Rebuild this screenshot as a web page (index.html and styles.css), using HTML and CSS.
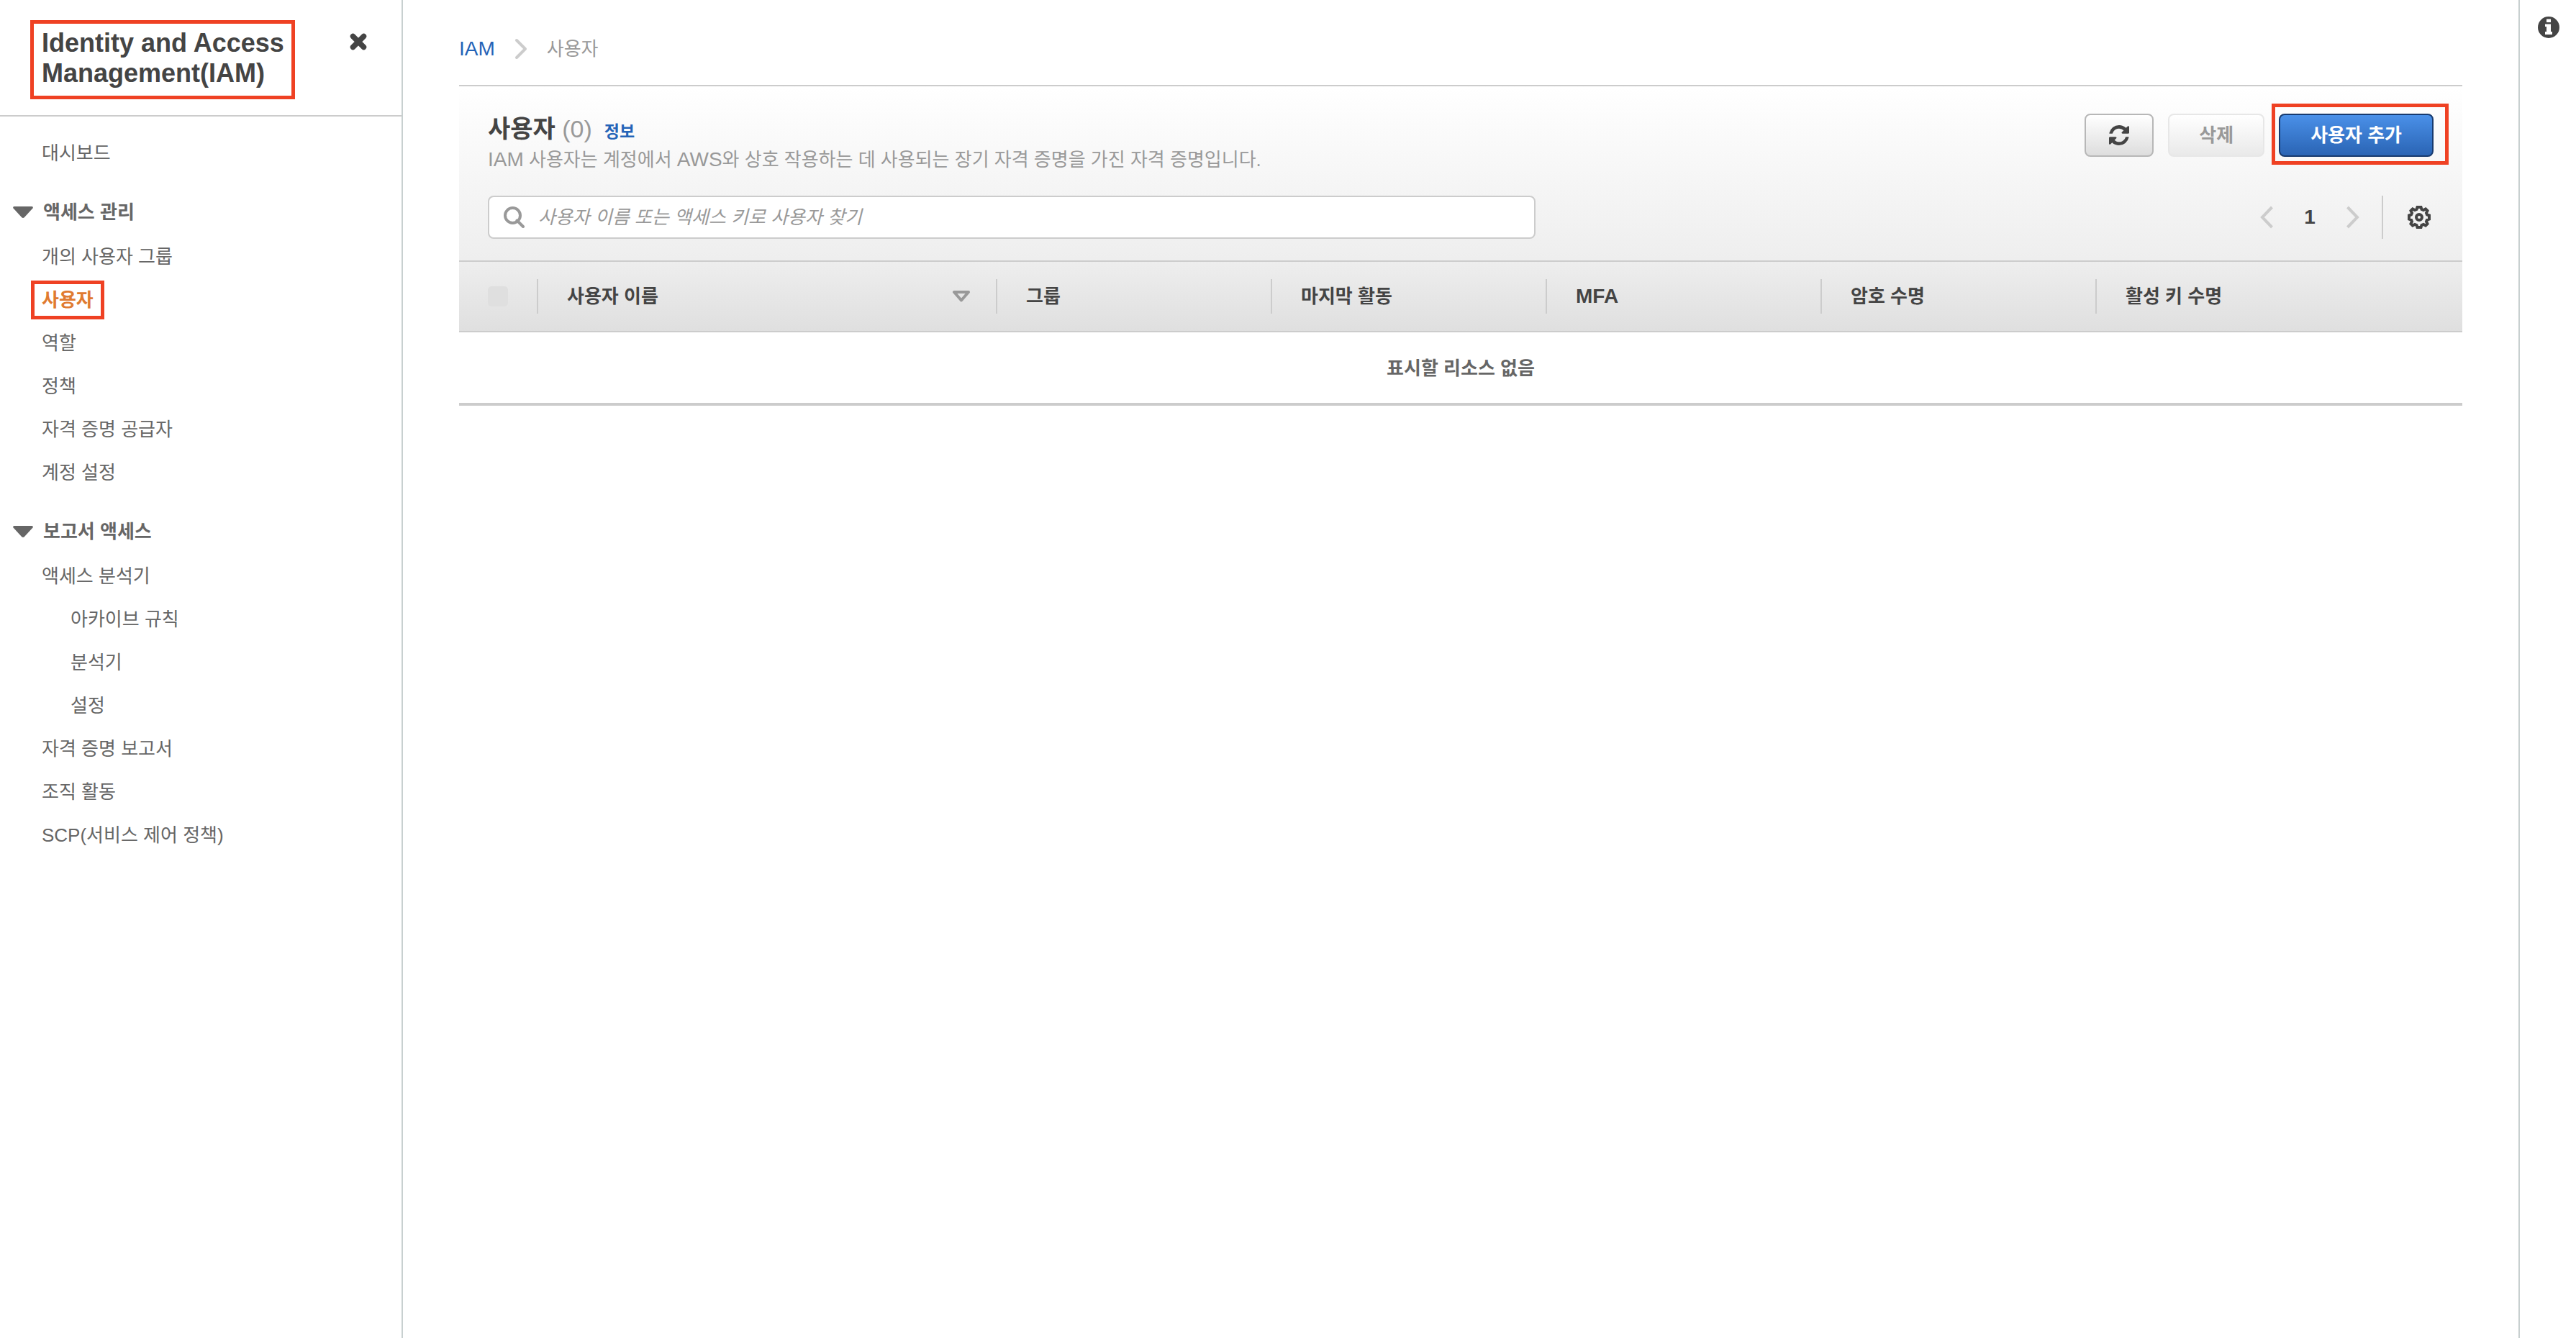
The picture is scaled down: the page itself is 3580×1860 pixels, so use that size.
FILE: index.html
```html
<!DOCTYPE html>
<html lang="ko">
<head>
<meta charset="utf-8">
<meta name="viewport" content="width=device-width, initial-scale=1">
<title>IAM - 사용자</title>
<link rel="stylesheet" href="styles.css">
</head>
<body>
<div class="app">
  <aside class="sidebar">
    <header class="sidebar-header">
      <h1 class="sidebar-title marked">Identity and Access Management(IAM)</h1>
      <button class="icon-button close" type="button" aria-label="닫기">
        <svg width="26" height="26" viewBox="0 0 26 26"><path d="M5.500 5.500L20.500 20.500M20.500 5.500L5.500 20.500" stroke="#444" stroke-width="7.500" stroke-linecap="round"/></svg>
      </button>
    </header>
    <nav class="nav">
      <ul class="nav-list">
        <li><a href="#dashboard">대시보드</a></li>
      </ul>
      <h2 class="nav-heading"><svg class="caret" width="28" height="16" viewBox="0 0 28 16"><path d="M1.500 0H26.500Q28.500 0.500 27.500 2.500L16 15Q14 17 12 15L0.500 2.500Q-0.500 0.500 1.500 0Z" fill="#666"/></svg>액세스 관리</h2>
      <ul class="nav-list">
        <li><a href="#groups">개의 사용자 그룹</a></li>
        <li><a class="active marked" href="#users" aria-current="page">사용자</a></li>
        <li><a href="#roles">역할</a></li>
        <li><a href="#policies">정책</a></li>
        <li><a href="#providers">자격 증명 공급자</a></li>
        <li><a href="#account">계정 설정</a></li>
      </ul>
      <h2 class="nav-heading"><svg class="caret" width="28" height="16" viewBox="0 0 28 16"><path d="M1.500 0H26.500Q28.500 0.500 27.500 2.500L16 15Q14 17 12 15L0.500 2.500Q-0.500 0.500 1.500 0Z" fill="#666"/></svg>보고서 액세스</h2>
      <ul class="nav-list">
        <li><a href="#analyzer">액세스 분석기</a>
          <ul class="nav-sublist">
            <li><a href="#archive-rules">아카이브 규칙</a></li>
            <li><a href="#analyzers">분석기</a></li>
            <li><a href="#settings">설정</a></li>
          </ul>
        </li>
        <li><a href="#credential-report">자격 증명 보고서</a></li>
        <li><a href="#organization">조직 활동</a></li>
        <li><a href="#scp">SCP(서비스 제어 정책)</a></li>
      </ul>
    </nav>
  </aside>

  <main class="main">
    <nav class="breadcrumb" aria-label="경로">
      <a class="latin" href="#iam">IAM</a>
      <svg width="18" height="30" viewBox="0 0 18 30"><path d="M3 3L15 15L3 27" fill="none" stroke="#ccc" stroke-width="4" stroke-linecap="round" stroke-linejoin="round"/></svg>
      <span>사용자</span>
    </nav>

    <section class="panel">
      <div class="panel-top">
        <div class="panel-row heading-row">
          <div>
            <h2 class="panel-title">사용자 <span class="count">(0)</span><a class="info-link" href="#info">정보</a></h2>
            <p class="description"><span class="latin">IAM</span> 사용자는 계정에서 <span class="latin">AWS</span>와 상호 작용하는 데 사용되는 장기 자격 증명을 가진 자격 증명입니다.</p>
          </div>
          <div class="actions">
            <button class="button" type="button" aria-label="새로 고침">
              <svg width="28" height="28" viewBox="0 0 1536 1536"><path fill="#444" d="M1511 928q0 5-1 7-64 268-268 434.500T764 1536q-146 0-282.500-55T238 1324l-129 129q-19 19-45 19t-45-19-19-45V960q0-26 19-45t45-19h448q26 0 45 19t19 45-19 45l-137 137q71 66 161 102t187 36q134 0 250-65t186-179q11-17 53-117 8-23 30-23h192q13 0 22.500 9.500t9.500 22.500zm25-800v448q0 26-19 45t-45 19h-448q-26 0-45-19t-19-45 19-45l138-138Q969 256 768 256q-134 0-250 65T332 500q-11 17-53 117-8 23-30 23H50q-13 0-22.500-9.500T18 608v-7q65-268 270-434.500T768 0q146 0 284 55.500T1297 212l130-129q19-19 45-19t45 19 19 45z"/></svg>
            </button>
            <button class="button" type="button" disabled>삭제</button>
            <button class="button primary marked" type="button">사용자 추가</button>
          </div>
        </div>
        <div class="panel-row tools-row">
          <label class="search">
            <svg width="30" height="30" viewBox="0 0 30 30"><path d="M18.500 19.500L27 28" stroke="#999" stroke-width="4" stroke-linecap="round"/><circle cx="12.500" cy="12.500" r="10.500" fill="none" stroke="#999" stroke-width="4"/></svg>
            <input type="search" placeholder="사용자 이름 또는 액세스 키로 사용자 찾기" aria-label="사용자 찾기">
          </label>
          <div class="pager">
            <button class="icon-button" type="button" aria-label="이전">
              <svg width="20" height="32" viewBox="0 0 20 32"><path d="M17.500 2L4 16L17.500 30" fill="none" stroke="#ccc" stroke-width="4"/></svg>
            </button>
            <span class="page-number">1</span>
            <button class="icon-button" type="button" aria-label="다음">
              <svg width="20" height="32" viewBox="0 0 20 32"><path d="M2.500 2L16 16L2.500 30" fill="none" stroke="#ccc" stroke-width="4"/></svg>
            </button>
            <span class="pager-divider"></span>
            <button class="icon-button" type="button" aria-label="환경설정">
              <svg width="32" height="32" viewBox="0 0 32 32" fill="none" stroke="#444" stroke-width="4"><path d="M13.500 2H18.500L19.500 5L22 6L25 4.500L27.500 7L26 10L27 12.500L30 13.500V18.500L27 19.500L26 22L27.500 25L25 27.500L22 26L19.500 27L18.500 30H13.500L12.500 27L10 26L7 27.500L4.500 25L6 22L5 19.500L2 18.500V13.500L5 12.500L6 10L4.500 7L7 4.500L10 6L12.500 5Z"/><circle cx="16" cy="16" r="4"/></svg>
            </button>
          </div>
        </div>
      </div>

      <table class="users">
        <colgroup>
          <col class="col-check"><col class="col-name"><col class="col-data"><col class="col-data"><col class="col-data"><col class="col-data"><col>
        </colgroup>
        <thead>
          <tr>
            <th scope="col"><div class="cell"><input class="check" type="checkbox" aria-label="모두 선택" disabled></div></th>
            <th scope="col"><div class="cell sortable">사용자 이름
              <svg width="28" height="16" viewBox="0 0 28 16"><path d="M4 2H24L14 13.500Z" fill="none" stroke="#999" stroke-width="4" stroke-linejoin="round"/></svg></div></th>
            <th scope="col"><div class="cell">그룹</div></th>
            <th scope="col"><div class="cell">마지막 활동</div></th>
            <th scope="col"><div class="cell latin">MFA</div></th>
            <th scope="col"><div class="cell">암호 수명</div></th>
            <th scope="col"><div class="cell">활성 키 수명</div></th>
          </tr>
        </thead>
        <tbody>
          <tr><td colspan="7">표시할 리소스 없음</td></tr>
        </tbody>
      </table>
    </section>
  </main>

  <aside class="rail">
    <button class="icon-button" type="button" aria-label="정보 패널 열기">
      <svg width="30" height="30" viewBox="0 0 30 30"><circle cx="15" cy="15" r="15" fill="#444"/><path d="M12 3.500H18V8H12ZM10 10.500H18V21H20V25H10V21H12V14H10Z" fill="#fff"/></svg>
    </button>
  </aside>
</div>
</body>
</html>
```
FILE: styles.css
```css
* {
  box-sizing: border-box;
}

body {
  margin: 0;
  background: #fff;
  color: #666;
  font-family: "Liberation Sans", "Noto Sans CJK KR", sans-serif;
  font-size: 26px;
  line-height: 36px;
}

h1, h2, p, ul {
  margin: 0;
  padding: 0;
}

ul {
  list-style: none;
}

a {
  color: #2464b8;
  text-decoration: none;
}

svg {
  display: block;
  flex: none;
}

button, input {
  margin: 0;
  font: inherit;
}

.latin {
  font-size: 28px;
}

.app {
  display: flex;
  min-height: 100vh;
}

/* Red call-out frames drawn over the highlighted items */
.marked {
  position: relative;
}

.marked::after {
  content: "";
  position: absolute;
  border: 5px solid #ef4123;
  pointer-events: none;
}

.icon-button {
  display: block;
  padding: 0;
  border: 0;
  background: none;
}

/* Sidebar */
.sidebar {
  flex: 0 0 560px;
  border-right: 2px solid #c8d0d0;
}

.sidebar-header {
  display: flex;
  justify-content: space-between;
  align-items: flex-start;
  padding: 39px 47px 37px 58px;
  border-bottom: 2px solid #ccc;
}

.sidebar-title {
  width: 350px;
  color: #444;
  font-size: 36px;
  line-height: 42px;
}

.sidebar-title::after {
  inset: -11px -2px -15px -16px;
}

.close {
  margin-top: 6px;
}

.nav {
  padding: 21px 0;
}

.nav-list {
  padding-left: 58px;
  line-height: 60px;
}

.nav-sublist {
  padding-left: 40px;
}

.nav-list a {
  color: #666;
}

.nav-list .active {
  color: #e07b30;
  font-weight: bold;
}

.active::after {
  inset: -12px -15px;
}

.nav-heading {
  display: flex;
  align-items: center;
  gap: 14px;
  margin: 22px 0 2px;
  padding-left: 18px;
  font-size: 26px;
  line-height: 60px;
}

/* Main column */
.main {
  flex: 1;
  min-width: 0;
  padding: 0 78px;
}

.breadcrumb {
  display: flex;
  align-items: center;
  gap: 27px;
  height: 118px;
  padding: 36px 0 18px;
  color: #999;
}

.panel {
  border-top: 2px solid #ccc;
}

.panel-top {
  padding: 38px 40px 30px;
  background: linear-gradient(#fff, #eee);
}

.panel-row {
  display: flex;
  justify-content: space-between;
}

.heading-row {
  height: 114px;
}

.panel-title {
  color: #444;
  font-size: 34px;
  line-height: 42px;
}

.count {
  color: #999;
  font-weight: normal;
}

.info-link {
  margin-left: 17px;
  font-size: 23px;
}

.description {
  color: #999;
}

.actions {
  display: flex;
  align-items: flex-start;
  gap: 20px;
}

.button {
  display: flex;
  align-items: center;
  height: 60px;
  padding: 0 32px;
  border: 2px solid #b7b7b7;
  border-radius: 8px;
  background: linear-gradient(#fff, #ddd);
  color: #444;
  font-weight: bold;
}

.button:disabled {
  padding: 0 41px;
  border-color: #e7e7e7;
  background: linear-gradient(#fff, #e9e9e9);
  color: #999;
}

.primary {
  padding: 0 42px;
  border-color: #173a6e;
  background: linear-gradient(#4a90e8, #2a64b4);
  color: #fff;
}

.primary::after {
  inset: -16px -23px -13px -12px;
}

.search {
  display: flex;
  flex: 0 1 1456px;
  align-items: center;
  gap: 18px;
  height: 60px;
  padding: 0 20px;
  border: 2px solid #ccc;
  border-radius: 8px;
  background: #fff;
}

.search input {
  flex: 1;
  min-width: 0;
  padding: 0;
  border: 0;
  outline: 0;
  background: none;
}

.search input::placeholder {
  color: #999;
  font-style: italic;
  opacity: 1;
}

.pager {
  display: flex;
  align-items: center;
  padding-right: 4px;
}

.page-number {
  width: 100px;
  color: #444;
  font-size: 28px;
  font-weight: bold;
  text-align: center;
}

.pager-divider {
  width: 2px;
  height: 60px;
  margin: 0 34px 0 30px;
  background: #ccc;
}

/* Users table */
.users {
  width: 100%;
  border-collapse: separate;
  border-spacing: 0;
  table-layout: fixed;
}

.col-check {
  width: 110px;
}

.col-name {
  width: 638px;
}

.col-data {
  width: 382px;
}

.users thead {
  background: linear-gradient(#eee, #dfdfdf);
}

.users th {
  height: 100px;
  padding: 0;
  border-top: 2px solid #ccc;
  border-bottom: 2px solid #ccc;
  color: #444;
  text-align: left;
}

.cell {
  display: flex;
  align-items: center;
  height: 48px;
  padding-left: 40px;
}

th:not(:last-child) .cell {
  border-right: 2px solid #ccc;
}

.sortable {
  justify-content: space-between;
  padding-right: 34px;
}

.check {
  width: 28px;
  height: 28px;
  border-radius: 5px;
  background: #dfdfdf;
  appearance: none;
}

.users td {
  height: 102px;
  padding: 2px 0 0;
  border-bottom: 4px solid #ccc;
  font-weight: bold;
  text-align: center;
}

/* Right rail */
.rail {
  flex: 0 0 80px;
  padding: 23px 0 0 25px;
  border-left: 2px solid #c8d0d0;
}
```
